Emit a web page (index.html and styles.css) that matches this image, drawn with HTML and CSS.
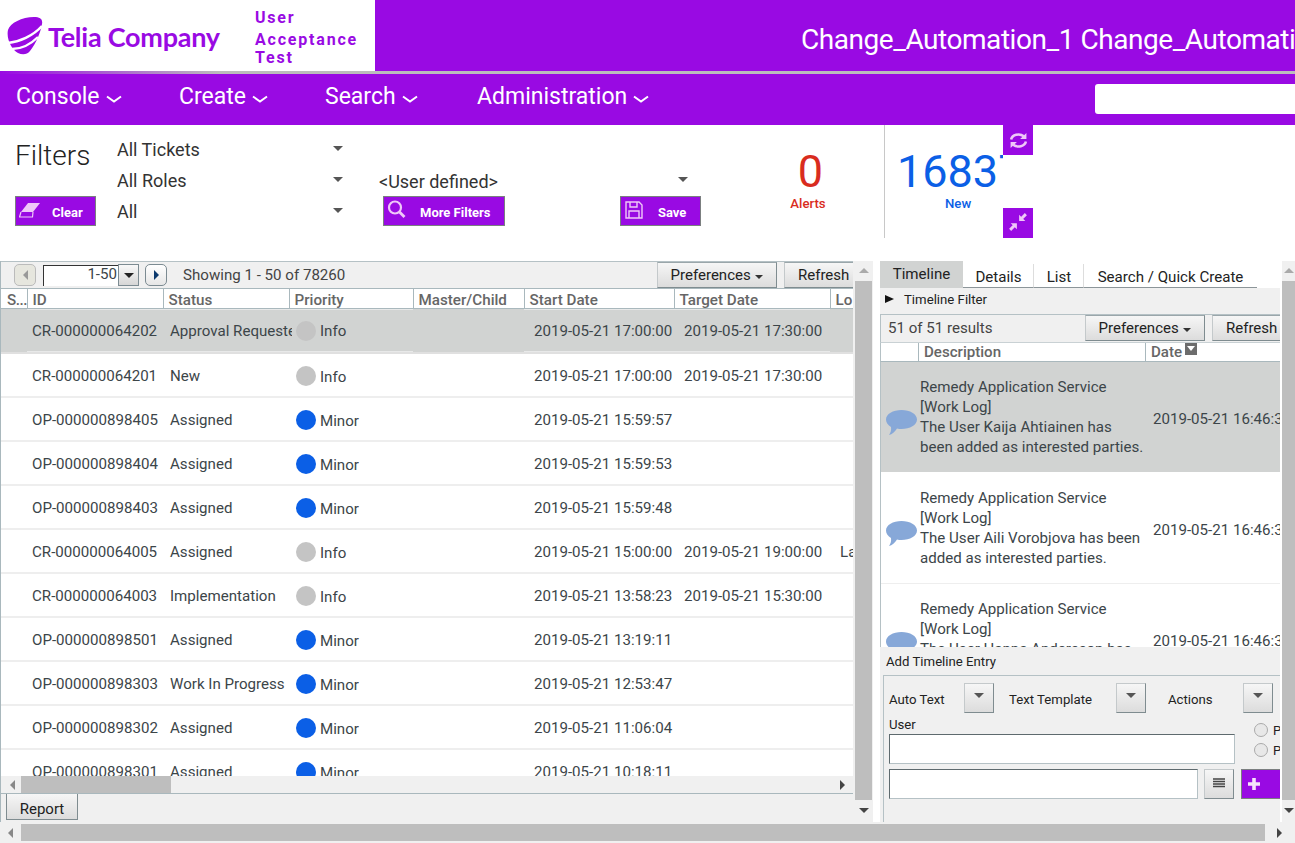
FILE: index.html
```html
<!DOCTYPE html>
<html lang="en">
<head>
<meta charset="utf-8">
<title>Telia Company</title>
<link rel="stylesheet" href="styles.css">
</head>
<body>
<div class="app">
  <header class="top">
    <div class="brand">
      <svg class="pebble" viewBox="0 0 36 38" width="36" height="38"><path fill="#990ae3" d="M1 13C3 6 15 0 27 0c6 0 9 2 8 7-1 7-6 20-12 27-3 4-8 4-12 2C5 33 -1 22 1 13z"/><path d="M1 26C12 25 26 19 35 9" fill="none" stroke="#fff" stroke-width="2.6"/><path d="M5 32C14 32 24 27 31 20" fill="none" stroke="#fff" stroke-width="2.4"/></svg>
      <span class="wordmark">Telia Company</span>
      <div class="env"><span>User</span><span>Acceptance</span><span>Test</span></div>
    </div>
    <div class="title">Change_Automation_1 Change_Automation_1 Change_Automation_1</div>
  </header>
  <div class="rule"></div>
  <nav class="nav">
    <a class="nav-item n1">Console<svg class="chev" viewBox="0 0 16 8" width="16" height="8"><path d="M1 1.5l7 5 7-5" fill="none" stroke="#fff" stroke-width="2"/></svg></a>
    <a class="nav-item n2">Create<svg class="chev" viewBox="0 0 16 8" width="16" height="8"><path d="M1 1.5l7 5 7-5" fill="none" stroke="#fff" stroke-width="2"/></svg></a>
    <a class="nav-item n3">Search<svg class="chev" viewBox="0 0 16 8" width="16" height="8"><path d="M1 1.5l7 5 7-5" fill="none" stroke="#fff" stroke-width="2"/></svg></a>
    <a class="nav-item n4">Administration<svg class="chev" viewBox="0 0 16 8" width="16" height="8"><path d="M1 1.5l7 5 7-5" fill="none" stroke="#fff" stroke-width="2"/></svg></a>
    <div class="nav-search"></div>
  </nav>

  <section class="filters">
    <div class="f-a">
      <h1 class="f-title">Filters</h1>
      <button class="pbtn clear"><svg viewBox="0 0 22 16" width="22" height="16"><path d="M9 1h12l-7 9H2z" fill="#efc8f8"/><path d="M2 10l-1.500 5h13l.5-5" fill="none" stroke="#efc8f8" stroke-width="1.200"/></svg><span>Clear</span></button>
    </div>
    <div class="f-b">
      <div class="sel"><span>All Tickets</span><i class="tri"></i></div>
      <div class="sel"><span>All Roles</span><i class="tri"></i></div>
      <div class="sel"><span>All</span><i class="tri"></i></div>
    </div>
    <div class="f-c">
      <div class="sel wide"><span>&lt;User defined&gt;</span><i class="tri"></i></div>
      <div class="f-btns">
        <button class="pbtn more"><svg viewBox="0 0 20 20" width="20" height="20"><circle cx="8" cy="7.500" r="6" fill="none" stroke="#efc8f8" stroke-width="2.2"/><path d="M12.500 12l5 5" stroke="#efc8f8" stroke-width="2.800"/></svg><span>More Filters</span></button>
        <button class="pbtn save"><svg viewBox="0 0 18 18" width="18" height="18"><path d="M1 1h13l3 3v13H1z" fill="none" stroke="#efc8f8" stroke-width="1.400"/><path d="M5 1v5h7V1M4 17v-7h10v7" fill="none" stroke="#efc8f8" stroke-width="1.400"/></svg><span>Save</span></button>
      </div>
    </div>
    <div class="stat alerts"><b>0</b><span>Alerts</span></div>
    <div class="stat new"><div class="clip"><b>16837</b></div><span>New</span></div>
    <div class="f-side">
      <button class="sq"><svg viewBox="0 0 18 16" width="19" height="17"><path d="M2 7a7 5.500 0 0 1 12-3M16 9a7 5.500 0 0 1-12 3" fill="none" stroke="#efc8f8" stroke-width="2.400"/><path d="M16.500 1v5.500h-6zM1.500 15V9.500h6z" fill="#efc8f8"/></svg></button>
      <button class="sq squeeze"><svg viewBox="0 0 16 16" width="18" height="18"><path d="M15 1L10.500 5.500M1 15l4.500-4.500" stroke="#efc8f8" stroke-width="2.600"/><path d="M9 1.500V7h5.500zM7 14.500V9H1.500z" fill="#efc8f8"/></svg></button>
    </div>
  </section>

  <main class="work">
    <section class="left">
      <div class="l-tools">
        <button class="pager off"><i class="ar-l"></i></button>
        <div class="page-in">1-50</div>
        <button class="page-dd"><i class="tri dark"></i></button>
        <button class="pager on"><i class="ar-r"></i></button>
        <span class="showing">Showing 1 - 50 of 78260</span>
        <button class="gbtn prefs">Preferences <i class="tri small"></i></button>
        <button class="gbtn refresh">Refresh</button>
      </div>
      <div class="t-wrap">
        <table class="grid">
          <colgroup><col class="c1"><col class="c2"><col class="c3"><col class="c4"><col class="c5"><col class="c6"><col class="c7"><col class="c8"></colgroup>
          <thead><tr><th>S...</th><th>ID</th><th>Status</th><th>Priority</th><th>Master/Child</th><th>Start Date</th><th>Target Date</th><th>Lo</th></tr></thead>
          <tbody>
            <tr class="sel-row"><td></td><td class="l">CR-000000064202</td><td class="l">Approval Requested</td><td class="l"><i class="dot info"></i>Info</td><td></td><td class="l">2019-05-21 17:00:00</td><td class="l">2019-05-21 17:30:00</td><td></td></tr>
            <tr><td></td><td>CR-000000064201</td><td>New</td><td><i class="dot info"></i>Info</td><td></td><td>2019-05-21 17:00:00</td><td>2019-05-21 17:30:00</td><td></td></tr>
            <tr><td></td><td>OP-000000898405</td><td>Assigned</td><td><i class="dot minor"></i>Minor</td><td></td><td>2019-05-21 15:59:57</td><td></td><td></td></tr>
            <tr><td></td><td>OP-000000898404</td><td>Assigned</td><td><i class="dot minor"></i>Minor</td><td></td><td>2019-05-21 15:59:53</td><td></td><td></td></tr>
            <tr><td></td><td>OP-000000898403</td><td>Assigned</td><td><i class="dot minor"></i>Minor</td><td></td><td>2019-05-21 15:59:48</td><td></td><td></td></tr>
            <tr><td></td><td>CR-000000064005</td><td>Assigned</td><td><i class="dot info"></i>Info</td><td></td><td>2019-05-21 15:00:00</td><td>2019-05-21 19:00:00</td><td>La</td></tr>
            <tr><td></td><td>CR-000000064003</td><td>Implementation</td><td><i class="dot info"></i>Info</td><td></td><td>2019-05-21 13:58:23</td><td>2019-05-21 15:30:00</td><td></td></tr>
            <tr><td></td><td>OP-000000898501</td><td>Assigned</td><td><i class="dot minor"></i>Minor</td><td></td><td>2019-05-21 13:19:11</td><td></td><td></td></tr>
            <tr><td></td><td>OP-000000898303</td><td>Work In Progress</td><td><i class="dot minor"></i>Minor</td><td></td><td>2019-05-21 12:53:47</td><td></td><td></td></tr>
            <tr><td></td><td>OP-000000898302</td><td>Assigned</td><td><i class="dot minor"></i>Minor</td><td></td><td>2019-05-21 11:06:04</td><td></td><td></td></tr>
            <tr><td></td><td>OP-000000898301</td><td>Assigned</td><td><i class="dot minor"></i>Minor</td><td></td><td>2019-05-21 10:18:11</td><td></td><td></td></tr>
          </tbody>
        </table>
      </div>
      <div class="hbar inner"><i class="ar-l"></i><div class="h-thumb"></div><i class="ar-r"></i></div>
      <div class="report-row"><button class="gbtn report">Report</button></div>
    </section>
    <div class="vbar mid"><i class="ar-u"></i><div class="v-thumb"></div><i class="ar-d"></i></div>
    <section class="right">
      <div class="tabs">
        <div class="tab active">Timeline</div><div class="tab t2">Details</div><div class="tab t3">List</div><div class="tab t4">Search / Quick Create</div>
      </div>
      <div class="tl-filter"><i class="ar-r black"></i>Timeline Filter</div>
      <div class="r-tools">
        <span class="results">51 of 51 results</span>
        <button class="gbtn prefs2">Preferences <i class="tri small"></i></button>
        <button class="gbtn refresh2">Refresh</button>
      </div>
      <div class="tl-head"><div class="h0"></div><div class="h1c">Description</div><div class="h2c">Date<i class="sortbox"></i></div></div>
      <div class="tl-list">
        <div class="tl-row active">
          <svg class="bubble" viewBox="0 0 31 26" width="31" height="26"><path d="M15.500 0C24 0 31 4 31 9.500S24 19 15.500 19c-1.500 0-3 0-4.500-.5C9 21.500 6 24.500 3 25c1.500-2 2.500-5 2-8C2 15 0 12.500 0 9.500 0 4 7 0 15.500 0z" fill="#87a8d8"/></svg>
          <div class="tl-text">Remedy Application Service<br>[Work Log]<br>The User Kaija Ahtiainen has been added as interested parties.</div>
          <div class="tl-date">2019-05-21 16:46:38</div>
        </div>
        <div class="tl-row">
          <svg class="bubble" viewBox="0 0 31 26" width="31" height="26"><path d="M15.500 0C24 0 31 4 31 9.500S24 19 15.500 19c-1.500 0-3 0-4.500-.5C9 21.500 6 24.500 3 25c1.500-2 2.500-5 2-8C2 15 0 12.500 0 9.500 0 4 7 0 15.500 0z" fill="#87a8d8"/></svg>
          <div class="tl-text">Remedy Application Service<br>[Work Log]<br>The User Aili Vorobjova has been added as interested parties.</div>
          <div class="tl-date">2019-05-21 16:46:38</div>
        </div>
        <div class="tl-row">
          <svg class="bubble" viewBox="0 0 31 26" width="31" height="26"><path d="M15.500 0C24 0 31 4 31 9.500S24 19 15.500 19c-1.500 0-3 0-4.500-.5C9 21.500 6 24.500 3 25c1.500-2 2.500-5 2-8C2 15 0 12.500 0 9.500 0 4 7 0 15.500 0z" fill="#87a8d8"/></svg>
          <div class="tl-text">Remedy Application Service<br>[Work Log]<br>The User Hanna Andersson has been added as interested parties.</div>
          <div class="tl-date">2019-05-21 16:46:38</div>
        </div>
      </div>
      <div class="add">
        <div class="add-title">Add Timeline Entry</div>
        <div class="add-box">
          <div class="add-row1">
            <span class="a1">Auto Text</span><button class="ddb"><i class="tri"></i></button>
            <span class="a2">Text Template</span><button class="ddb"><i class="tri"></i></button>
            <span class="a3">Actions</span><button class="ddb"><i class="tri"></i></button>
          </div>
          <div class="add-row2">
            <div class="user-col"><label class="u-lab">User</label><div class="txt u-in"></div></div>
            <div class="radios">
              <div class="rad"><i></i>P</div>
              <div class="rad"><i></i>P</div>
            </div>
          </div>
          <div class="add-row3">
            <div class="txt w-in"></div>
            <button class="ddb lines"><svg viewBox="0 0 12 10" width="12" height="10"><path d="M0 1h12M0 3.500h12M0 6h12M0 8.500h12" stroke="#444" stroke-width="1.300"/></svg></button>
            <button class="addb"><svg viewBox="0 0 12 12" width="12" height="12"><path d="M6 0v12M0 6h12" stroke="#f6e3fb" stroke-width="3.600"/></svg></button>
          </div>
        </div>
      </div>
    </section>
    <div class="vbar edge"><i class="ar-u"></i><div class="v-thumb"></div><i class="ar-d"></i></div>
  </main>
  <div class="hbar page"><i class="ar-l"></i><div class="h-thumb"></div><i class="ar-r"></i></div>
</div>
</body>
</html>
```
FILE: styles.css
```css
*{box-sizing:border-box}
html,body{margin:0;padding:0;height:100%;overflow:hidden;background:#fff}
body{font-family:Roboto,"Liberation Sans",sans-serif;font-size:15.1px;color:#3c4549}
button{font-family:inherit;padding:0;margin:0;cursor:default}
i{display:inline-block;font-style:normal}
.app{width:1295px;height:843px;display:flex;flex-direction:column;overflow:hidden}

/* header */
.top{display:flex;height:71px;flex:none}
.brand{width:375px;flex:none;background:#fff;display:flex;align-items:flex-start;padding-left:7px}
.pebble{margin-top:17px;flex:none}
.wordmark{font-family:Lato,Roboto,sans-serif;font-weight:700;font-size:27px;letter-spacing:-.25px;color:#990ae3;margin:20px 0 0 5px;line-height:34px;white-space:nowrap;width:207px}
.env{display:flex;flex-direction:column;color:#990ae3;font-weight:700;font-size:16px;letter-spacing:1.8px;padding-top:8px;line-height:20px}
.env span:nth-child(3){margin-top:-2px}
.env span:nth-child(2){margin-top:2px}
.title{flex:1;background:#990ae3;color:#fff;font-size:28px;letter-spacing:-.45px;line-height:79px;padding-left:426px;white-space:nowrap;overflow:hidden;min-width:0}
.rule{height:3px;flex:none;background:linear-gradient(90deg,#990ae3 0,#bcbcbc 220px)}
.nav{height:51px;flex:none;background:#990ae3;display:flex;align-items:center;color:#fff;font-size:23px;padding-left:16px}
.nav-item{display:flex;align-items:center;white-space:nowrap;margin-top:-6px}
.chev{margin:5px 0 0 6px}
.n1{width:163px}
.n2{width:146px}
.n3{width:152px}
.n4{width:618px}
.nav-search{flex:1;height:30px;background:#fff;border-radius:3px 0 0 3px;margin-top:-2px}

/* filters */
.filters{height:113px;flex:none;display:flex;background:#fff}
.f-a{width:117px;padding-left:15px;flex:none}
.f-title{font-weight:300;font-size:28px;line-height:34px;margin:14px 0 23px;color:#222}
.pbtn{display:flex;align-items:center;height:30px;background:#990ae3;border:1px solid #7b7f80;color:#fff;font-weight:700;font-size:13px}
.pbtn span{padding-top:3px}
.pbtn svg{margin-top:-2px;flex:none}
.clear{width:81px;padding-left:3px}
.clear span{margin-left:11px}
.f-b{width:262px;flex:none;padding-top:9px}
.sel{display:flex;justify-content:space-between;align-items:center;font-size:18px;height:31px;color:#333;width:228px}
.sel .tri{margin:0 2px 3px 0}
.tri{width:0;height:0;border-left:5px solid transparent;border-right:5px solid transparent;border-top:5px solid #555}
.f-c{width:383px;flex:none;padding-top:40px}
.sel.wide{width:311px}
.sel.wide span{padding-top:2px}
.f-btns{display:flex;margin:0 0 0 4px}
.more{width:122px;padding-left:3px;margin-right:115px}
.more span{margin-left:13px}
.save{width:81px;padding-left:4px}
.save span{margin-left:15px}
.stat{display:flex;flex-direction:column;align-items:center;flex:none}
.stat b{font-weight:400;font-size:45px;line-height:52px}
.stat span{font-weight:500;font-size:13.2px;line-height:16px;margin-top:-2px}
.alerts{width:148px;padding-top:21px;color:#d92c1e;border-right:1px solid #c8c8c8;margin-left:-25px}
.alerts span{margin-right:5px}
.new{width:118px;padding-top:21px;color:#0b5fe6;align-items:flex-start}
.new .clip{width:106px;overflow:hidden;margin-left:12px;white-space:nowrap}
.new span{margin-left:60px}
.f-side{width:30px;display:flex;flex-direction:column;justify-content:space-between;flex:none}
.sq{width:30px;height:30px;background:#990ae3;border:0;display:flex;align-items:center;justify-content:center}
.squeeze{padding-bottom:3px}

/* work */
.work{height:561px;margin-top:23px;flex:none;display:flex}
.left{width:853px;flex:none;display:flex;flex-direction:column;background:#f0f0f0;border-left:1px solid #a9b8bd;min-width:0;overflow:hidden}
.l-tools{height:28px;flex:none;display:flex;align-items:center;border-top:1px solid #b5c1c5;border-bottom:1px solid #a9b8bd;padding-left:13px}
.pager{width:22px;height:22px;border-radius:5px;border:1px solid #bbb;background:linear-gradient(#fafafa,#ddd);display:flex;align-items:center;justify-content:center;flex:none}
.pager.off{background:#e6e6de}
.pager.on{margin-left:6px;border-color:#7c8b92;background:linear-gradient(#fff,#e6e6e6)}
.page-in{width:75px;height:21px;margin-left:7px;background:#fff;border-left:1px solid #333;border-top:1px solid #333;text-align:right;line-height:17px;padding-right:1px;flex:none}
.page-dd{width:21px;height:22px;border:1px solid #7c8b92;background:linear-gradient(#f8f8f8,#d6d6d6);display:flex;align-items:center;justify-content:center;flex:none}
.tri.dark{border-top-color:#222}
.showing{margin-left:16px;width:474px;flex:none;white-space:nowrap;color:#444}
.gbtn{height:26px;border:1px solid #7f8c90;border-top-color:#9aa6aa;border-left-color:#c4c9cb;background:linear-gradient(#f6f6f6,#dcdcdc);font-size:15px;color:#222;white-space:nowrap;flex:none}
.prefs{width:120px}
.refresh{width:75px;margin-left:7px;text-align:left;padding-left:13px}
.tri.small{border-left-width:4px;border-right-width:4px;border-top-width:4px;border-top-color:#333;margin-left:1px;vertical-align:1px}
.t-wrap{height:487px;flex:none;overflow:hidden;background:#fff}
.grid{table-layout:fixed;border-collapse:collapse;width:950px}
.c1{width:26px}.c2{width:136px}.c3{width:126px}.c4{width:124px}.c5{width:111px}.c6{width:150px}.c7{width:156px}.c8{width:121px}
.grid th{height:19px;padding:3px 0 0 5px;font-size:15.2px;font-weight:500;color:#666;text-align:left;border-right:1px solid #a9b8bd;border-bottom:1px solid #a9b8bd;white-space:nowrap;overflow:hidden;line-height:16px}
.grid th:first-child{padding-left:6px;letter-spacing:-.5px}
.grid td{height:44px;padding:3px 0 0 5px;white-space:nowrap;overflow:hidden;border-bottom:2px solid #eee}
.grid td:nth-child(3){padding-left:7px}
.grid td:nth-child(4){padding-top:5px}
.grid td:nth-child(6),.grid td:nth-child(7),.grid td:nth-child(8){padding-left:10px}
.grid tbody tr:first-child td{border-bottom-color:#e0e0e0}
.sel-row td{background:#d1d3d2}
.grid .sel-row td{padding-top:1px}
.grid .sel-row td:nth-child(4){padding-top:3px}
.sel-row td.l{background:linear-gradient(#d1d3d2 42px,#fff 42px)}
.grid .sel-row td:nth-child(3){overflow:visible;clip-path:inset(0 -3px 0 0)}
.dot{width:20px;height:20px;border-radius:50%;vertical-align:middle;margin:-3px 4px 0 2px}
.dot.info{background:#c4c4c4}
.dot.minor{background:#0b5fe6}
.hbar{display:flex;align-items:center;flex:none;background:#f0f0f0}
.hbar.inner{height:18px;padding:0 8px 0 0;border-bottom:1px solid #a9b8bd}
.h-thumb{background:#bebebe;height:100%}
.inner .h-thumb{width:150px;height:17px;margin:0 auto 0 6px}
.report-row{flex:1;padding:0 0 0 5px}
.report{width:72px;height:26px;border-top:0;border-left:1px solid #7f8c90;padding-top:4px}
.ar-l,.ar-r{width:0;height:0;border-top:5px solid transparent;border-bottom:5px solid transparent}
.ar-l{border-right:5px solid #888}
.ar-r{border-left:5px solid #444}
.ar-u,.ar-d{width:0;height:0;border-left:5px solid transparent;border-right:5px solid transparent;flex:none}
.ar-u{border-bottom:5px solid #aaa}
.ar-d{border-top:5px solid #444}
.inner .ar-l{margin-left:9px}
.pager .ar-l{margin:0;border-right-color:#999}
.pager .ar-r{border-left-color:#0d3a6e}
.vbar{display:flex;flex-direction:column;align-items:center;background:#f0f0f0;flex:none}
.vbar .ar-u{margin:7px 0 8px}
.vbar .ar-d{margin-top:8px}
.v-thumb{width:100%;height:519px;flex:none;background:#bebebe}
.mid{width:20px;padding:0 1px 0 2px;margin-right:7px}
.right{width:400px;flex:none;display:flex;flex-direction:column;min-width:0;overflow:hidden;margin-right:2px}
.edge{width:13px}

/* right pane */
.tabs{height:27px;flex:none;display:flex;align-items:flex-end;background:#fff}
.tab{height:24px;font-size:15.1px;line-height:26px;text-align:center;border-bottom:1px solid #8c9599;border-right:1px solid #ddd;color:#222;flex:none}
.tab.active{height:27px;width:83px;background:#d1d3d2;border-bottom:0;line-height:27px;border-right:0}
.t2{width:71px;padding-left:1px}.t3{width:50px;padding-left:1px}.t4{width:173px;border-right:0}
.tl-filter{height:26px;flex:none;background:#f0f0f0;font-size:13.2px;display:flex;align-items:center;color:#222;padding-bottom:4px}
.tl-filter .ar-r{margin:0 10px 0 5px;border-left:9px solid #111;border-top-width:4px;border-bottom-width:4px}
.r-tools{height:28px;flex:none;background:#f0f0f0;display:flex;align-items:center;border-top:1px solid #b5c1c5;border-left:1px solid #b5c1c5;padding:0 0 1px 7px}
.results{width:197px;flex:none;color:#444}
.prefs2{width:120px}
.refresh2{width:75px;margin-left:7px;text-align:left;padding-left:13px}
.tl-head{height:20px;flex:none;display:flex;background:#fff;border-bottom:1px solid #a9b8bd;border-top:1px solid #c9d1d4;font-weight:500;color:#666;border-left:1px solid #b5c1c5;line-height:19px}
.h0{width:38px;border-right:1px solid #a9b8bd}
.h1c{width:227px;padding-left:5px;border-right:1px solid #a9b8bd}
.h2c{padding-left:5px;display:flex}
.sortbox{width:12px;height:12px;background:#6c6c6c;margin:0 0 0 3px;position:relative}
.sortbox::after{content:"";position:absolute;left:2px;top:3px;border-left:4px solid transparent;border-right:4px solid transparent;border-top:5px solid #fff}
.tl-list{height:285px;flex:none;overflow:hidden;background:#fff;border-left:1px solid #b5c1c5}
.tl-row{height:111px;display:flex;align-items:center;border-bottom:1px solid #eee}
.tl-row.active{background:#d1d3d2;border-bottom:1px solid #fff}
.bubble{margin:11px 0 0 5px;flex:none}
.tl-text{width:227px;margin-left:3px;line-height:20px;flex:none}
.tl-date{white-space:nowrap;margin:3px 0 0 6px}
.add{flex:1;background:#f0f0f0;font-size:13.2px;color:#222;display:flex;flex-direction:column}
.add-title{height:28px;line-height:29px;padding-left:6px;flex:none}
.add-box{flex:1;margin-left:3px;border-left:1px solid #b5c1c5;border-top:1px solid #b5c1c5;padding:7px 0 0 5px}
.add-row1{display:flex;align-items:center;height:30px}
.add-row1 span{padding-top:2px}
.a1{width:75px}.a2{width:107px;margin-left:15px}.a3{width:75px;margin-left:22px}
.ddb{width:30px;height:30px;border:1px solid #7f8c90;border-top-color:#c4c9cb;border-left-color:#c4c9cb;background:linear-gradient(#f6f6f6,#dcdcdc);display:flex;align-items:center;justify-content:center;flex:none;padding-bottom:6px}
.add-row2{display:flex;height:47px;margin-top:4px}
.user-col{width:346px;display:flex;flex-direction:column;flex:none}
.u-lab{line-height:16px;height:17px;flex:none}
.txt{background:#fff;border:1px solid #5e6a6e;border-right-color:#b5c1c5;border-bottom-color:#b5c1c5;height:30px;flex:none}
.radios{margin:0 0 0 19px;padding-top:3px;flex:none}
.rad{display:flex;align-items:center;height:20px;font-size:13px;white-space:nowrap}
.rad i{width:14px;height:14px;border-radius:50%;border:1px solid #aaa;background:#e8e8e8;margin-right:5px}
.add-row3{display:flex;margin-top:5px}
.w-in{width:309px}
.lines{margin-left:6px;padding-bottom:2px}
.addb{width:60px;height:30px;background:#990ae3;border:1px solid #7b7f80;margin-left:7px;display:flex;align-items:center;padding-left:6px;flex:none}
.hbar.page{height:21px;padding-top:2px;padding-bottom:2px}
.page .ar-l{margin:0 0 0 8px}
.page .h-thumb{width:1244px;height:17px;margin:0 12px 0 8px}
```
